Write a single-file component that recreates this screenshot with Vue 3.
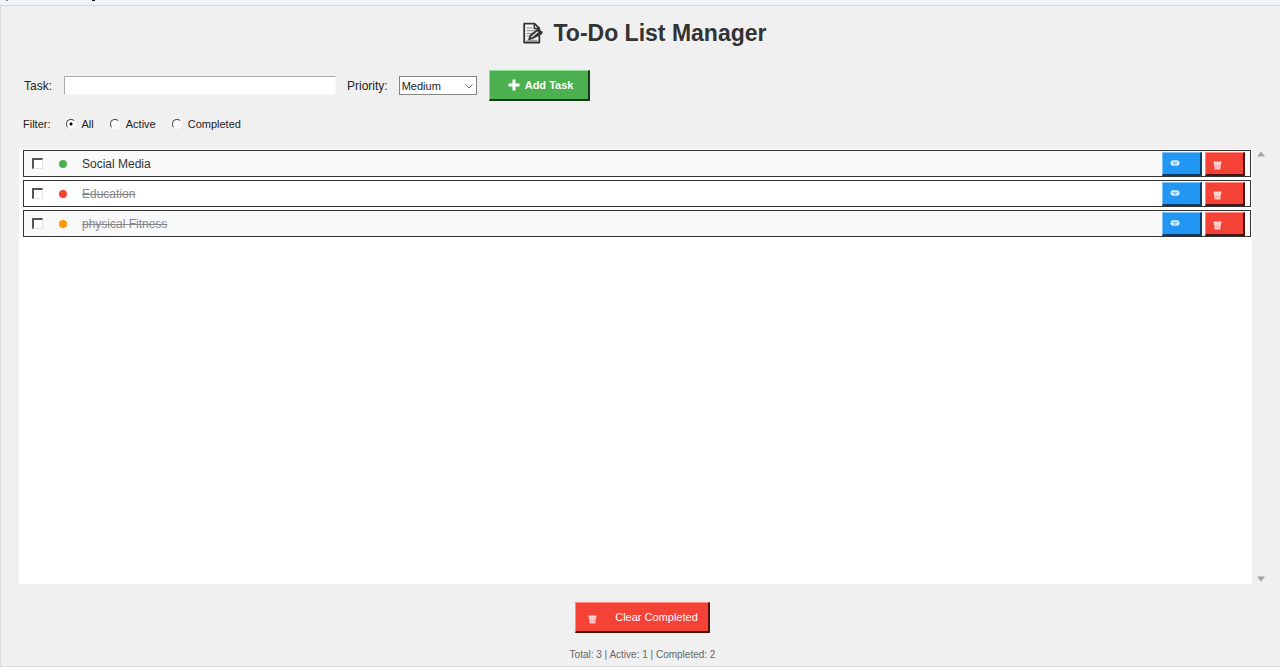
<script setup>
import { computed, ref } from 'vue'

const tasks = ref([
  { id: 1, text: 'Social Media', priority: 'low', done: false },
  { id: 2, text: 'Education', priority: 'high', done: true },
  { id: 3, text: 'physical Fitness', priority: 'medium', done: true },
])
const filters = ['All', 'Active', 'Completed']
const filter = ref('All')
const draft = ref('')
const priority = ref('Medium')

const visible = computed(() =>
  tasks.value.filter((t) => filter.value === 'All' || (filter.value === 'Completed') === t.done),
)
const completed = computed(() => tasks.value.filter((t) => t.done).length)

function addTask() {
  const text = draft.value.trim()
  if (!text) return
  tasks.value.push({ id: Date.now(), text, priority: priority.value.toLowerCase(), done: false })
  draft.value = ''
}
function removeTask(id) {
  tasks.value = tasks.value.filter((t) => t.id !== id)
}
function clearCompleted() {
  tasks.value = tasks.value.filter((t) => !t.done)
}
</script>

<template>
  <div class="window">
    <div class="titlebar"><i class="mark faint"></i><i class="mark"></i></div>
    <main class="panel">
      <h1 class="title">
        <svg class="memo" viewBox="0 0 20 22" width="20" height="22" aria-hidden="true">
          <path d="M1.2 1.7h10.3l4.8 4.6v14.2H1.2z" fill="#f6f6f6" stroke="#333" stroke-width="1.8" stroke-linejoin="round" />
          <path d="M11.3 1.7v4.8h5" fill="none" stroke="#333" stroke-width="1.4" />
          <path d="M3.5 6h6M3.5 8.7h8M3.5 11.4h6M3.5 14h3M3.5 18.3h10.5" stroke="#888" stroke-width="1" />
          <path d="M5 18.3l1.6-5.3 8.2-6.5 5.2 3.5-1.5 2.5-8.6 4.6z" fill="#333" />
          <path d="M8.3 15.2l6.6-5.4" stroke="#eee" stroke-width="1.3" />
        </svg>
        <span>To-Do List Manager</span>
      </h1>

      <form class="entry" @submit.prevent="addTask">
        <label for="task">Task:</label>
        <input id="task" v-model="draft" class="task-input" type="text" />
        <label for="priority">Priority:</label>
        <span class="select-wrap">
          <select id="priority" v-model="priority" class="select">
            <option>High</option>
            <option>Medium</option>
            <option>Low</option>
          </select>
          <svg class="chevron" viewBox="0 0 8 5" width="8" height="5" aria-hidden="true">
            <path d="M0.5 0.5L4 4L7.5 0.5" fill="none" stroke="#666" />
          </svg>
        </span>
        <button class="btn add" type="submit">
          <svg viewBox="0 0 12 12" width="12" height="12" aria-hidden="true">
            <path d="M6 0.5v11M0.5 6h11" stroke="#fff" stroke-width="3" />
          </svg>
          Add Task
        </button>
      </form>

      <div class="filters" role="radiogroup" aria-labelledby="filter-label">
        <span id="filter-label" class="filter-label">Filter:</span>
        <label v-for="f in filters" :key="f" class="filter">
          <input v-model="filter" class="radio" type="radio" name="filter" :value="f" />
          {{ f }}
        </label>
      </div>

      <div class="list-area">
        <ul class="list">
          <li v-for="t in visible" :key="t.id" class="item">
            <input :id="'done-' + t.id" class="check" type="checkbox" />
            <i class="dot" :class="t.priority"></i>
            <label class="name" :class="{ done: t.done }" :for="'done-' + t.id">{{ t.text }}</label>
            <button class="btn small edit" type="button" aria-label="Edit">
              <svg viewBox="0 0 10 6" width="10" height="6" aria-hidden="true">
                <rect x="0.5" y="0.2" width="9" height="5.6" rx="2.7" fill="#e0f0fd" />
                <path d="M2.5 2.3h5M3.5 4h3" stroke="#3f9be6" stroke-width="0.8" />
              </svg>
            </button>
            <button class="btn small remove" type="button" aria-label="Delete" @click="removeTask(t.id)">
              <svg class="bin" viewBox="0 0 9 9" width="9" height="9" aria-hidden="true">
                <path d="M0.5 0.5h8v2h-8zM1 2.5h7l-0.7 6h-5.6z" fill="#fcd5d2" />
                <path d="M3.2 3.5v4.5M5.8 3.5v4.5M1.5 5.5h6" stroke="#f79a93" stroke-width="0.6" />
              </svg>
            </button>
          </li>
        </ul>
        <div class="scrollbar" aria-hidden="true">
          <svg viewBox="0 0 8 6" width="8" height="6"><path d="M4 0.5L8 5.5H0z" fill="#a3a3a3" /></svg>
          <svg viewBox="0 0 8 6" width="8" height="6"><path d="M4 5.5L8 0.5H0z" fill="#a3a3a3" /></svg>
        </div>
      </div>

      <button class="btn clear" type="button" @click="clearCompleted">
        <svg class="bin" viewBox="0 0 9 9" width="9" height="9" aria-hidden="true">
          <path d="M0.5 0.5h8v2h-8zM1 2.5h7l-0.7 6h-5.6z" fill="#fcd5d2" />
          <path d="M3.2 3.5v4.5M5.8 3.5v4.5M1.5 5.5h6" stroke="#f79a93" stroke-width="0.6" />
        </svg>
        Clear Completed
      </button>
      <p class="stats">Total: {{ tasks.length }} | Active: {{ tasks.length - completed }} | Completed: {{ completed }}</p>
    </main>
  </div>
</template>

<style>
body {
  background: #f0f0f0;
}
</style>

<style scoped>
.window {
  display: flex;
  flex-direction: column;
  min-height: 100vh;
  color: #222;
  font-family: "Liberation Sans", Arial, sans-serif;
}
.window * {
  box-sizing: border-box;
}
.titlebar {
  display: flex;
  gap: 84px;
  height: 5px;
  padding-left: 6px;
  background: #eff4f9;
}
.mark {
  width: 3px;
  height: 1px;
  background: #111;
}
.mark.faint {
  width: 2px;
  background: #888;
}
.panel {
  display: flex;
  flex: 1;
  flex-direction: column;
  border: 1px solid #d9dcdf;
  border-right: 0;
}
.title {
  display: flex;
  align-items: center;
  justify-content: center;
  gap: 11px;
  margin: 13px 0 23px;
  padding-left: 8px;
  color: #333;
  font-size: 23px;
  line-height: 28px;
}
.entry {
  display: flex;
  align-items: center;
  padding-left: 23px;
  font-size: 12px;
}
.task-input {
  width: 272px;
  height: 19px;
  margin: 0 11px 0 12px;
  padding: 1px 2px;
  border: 1px solid #f8f8f8;
  border-top-color: #aaa;
  border-left-color: #aaa;
  background: #fff;
  font: inherit;
  outline: 0;
}
.select-wrap {
  position: relative;
  display: flex;
  margin: 0 12px 0 11px;
}
.select {
  width: 78px;
  height: 19px;
  padding: 0 2px;
  border: 1px solid #858585;
  border-radius: 0;
  background: #fff;
  color: #222;
  font: 11px "Liberation Sans", Arial, sans-serif;
  appearance: none;
}
.chevron {
  position: absolute;
  top: 8px;
  right: 4px;
  pointer-events: none;
}
.btn {
  display: flex;
  align-items: center;
  margin: 0;
  border: 1px solid;
  border-width: 1px 2px 2px 1px;
  color: #fff;
  font-family: inherit;
  font-size: 11px;
}
.add {
  gap: 5px;
  height: 31px;
  padding: 0 15px 0 18px;
  border-color: #8fe092 #163a18 #163a18 #8fe092;
  background: #4caf50;
  font-weight: bold;
}
.filters {
  display: flex;
  align-items: center;
  height: 16px;
  margin-top: 15px;
  padding-left: 22px;
  font-size: 11px;
}
.filter-label {
  margin-right: 15px;
}
.filter {
  display: flex;
  align-items: center;
  gap: 6px;
  margin-right: 16px;
}
.radio {
  width: 10px;
  height: 10px;
  margin: 0;
  border: 1px solid;
  border-color: #444 #fff #fff #444;
  border-radius: 50%;
  background: #fff;
  appearance: none;
}
.radio:checked {
  background: radial-gradient(circle, #000 0 1px, #fff 2px);
}
.list-area {
  display: flex;
  flex: 1;
  margin: 17px 13px 0 18px;
}
.list {
  display: flex;
  flex: 1;
  flex-direction: column;
  gap: 3px;
  margin: 0;
  padding: 1px 1px 1px 4px;
  background: #fff;
  list-style: none;
}
.item {
  display: flex;
  align-items: center;
  height: 27px;
  padding: 0 5px 0 8px;
  border: 1px solid #333;
  background: #fff;
}
.item:nth-child(odd) {
  background: #f9f9f9;
}
.check {
  width: 11px;
  height: 11px;
  margin: 0 16px 0 0;
  border: 1px solid;
  border-width: 2px 1px 1px 2px;
  border-color: #555 #e4e4e4 #e4e4e4 #555;
  background: #fff;
  appearance: none;
}
.dot {
  width: 8px;
  height: 8px;
  margin-right: 15px;
  border-radius: 50%;
}
.low {
  background: #4caf50;
}
.high {
  background: #f44336;
}
.medium {
  background: #ff9800;
}
.name {
  flex: 1;
  color: #333;
  font-size: 12px;
}
.name.done {
  color: #888;
  text-decoration: line-through;
}
.small {
  width: 40px;
  height: 24px;
  padding: 0 0 0 7px;
}
.edit {
  margin-right: 3px;
  border-color: #7cc0f8 #0c3d66 #0c3d66 #7cc0f8;
  background: #2196f3;
}
.remove,
.clear {
  border-color: #ff8a80 #4a1410 #4a1410 #ff8a80;
  background: #f44336;
}
.bin {
  margin-top: 4px;
}
.scrollbar {
  display: flex;
  flex-direction: column;
  justify-content: space-between;
  margin-left: 3px;
  padding: 2px;
}
.clear {
  gap: 18px;
  align-self: center;
  height: 31px;
  margin: 18px 0 14px 4px;
  padding: 0 10px 0 12px;
}
.stats {
  margin: 0 0 4px 4px;
  color: #666;
  font-size: 10px;
  line-height: 15px;
  text-align: center;
}
</style>
